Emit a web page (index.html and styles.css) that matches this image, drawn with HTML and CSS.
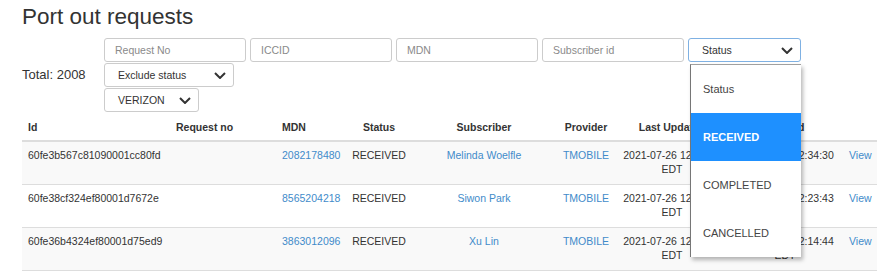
FILE: index.html
```html
<!DOCTYPE html>
<html lang="en">
<head>
<meta charset="utf-8">
<title>Port out requests</title>
<link rel="stylesheet" href="styles.css">
</head>
<body>
<div class="page">
  <h1 class="title">Port out requests</h1>
  <div class="filters">
    <div class="total">Total: 2008</div>
    <div class="filter-rows">
      <div class="filter-row">
        <input class="field" type="text" placeholder="Request No">
        <input class="field" type="text" placeholder="ICCID">
        <input class="field" type="text" placeholder="MDN">
        <input class="field" type="text" placeholder="Subscriber id">
        <div class="select select-status is-open">
          <span class="select-label">Status</span>
          <svg class="chev" width="12" height="7" viewBox="0 0 12 7"><polyline points="1,1 6,6 11,1" fill="none" stroke="#333" stroke-width="2"/></svg>
          <ul class="menu">
            <li class="menu-item">Status</li>
            <li class="menu-item is-active">RECEIVED</li>
            <li class="menu-item">COMPLETED</li>
            <li class="menu-item">CANCELLED</li>
          </ul>
        </div>
      </div>
      <div class="filter-row">
        <div class="select select-exclude">
          <span class="select-label">Exclude status</span>
          <svg class="chev" width="12" height="7" viewBox="0 0 12 7"><polyline points="1,1 6,6 11,1" fill="none" stroke="#333" stroke-width="2"/></svg>
        </div>
      </div>
      <div class="filter-row">
        <div class="select select-provider">
          <span class="select-label">VERIZON</span>
          <svg class="chev" width="12" height="7" viewBox="0 0 12 7"><polyline points="1,1 6,6 11,1" fill="none" stroke="#333" stroke-width="2"/></svg>
        </div>
      </div>
    </div>
  </div>

  <table class="grid">
    <colgroup>
      <col class="c-id"><col class="c-req"><col class="c-mdn"><col class="c-status"><col class="c-sub"><col class="c-prov"><col class="c-upd"><col class="c-cre"><col class="c-view">
    </colgroup>
    <thead>
      <tr>
        <th class="left">Id</th>
        <th class="left">Request no</th>
        <th class="left">MDN</th>
        <th>Status</th>
        <th>Subscriber</th>
        <th>Provider</th>
        <th>Last Updated</th>
        <th>Created</th>
        <th class="left"></th>
      </tr>
    </thead>
    <tbody>
      <tr class="stripe">
        <td class="left">60fe3b567c81090001cc80fd</td>
        <td class="left"></td>
        <td class="left"><a class="link" href="#">2082178480</a></td>
        <td>RECEIVED</td>
        <td><a class="link" href="#">Melinda Woelfle</a></td>
        <td><a class="link" href="#">TMOBILE</a></td>
        <td>2021-07-26 12:34:30 EDT</td>
        <td>2021-07-26 12:34:30 EDT</td>
        <td class="left"><a class="link" href="#">View</a></td>
      </tr>
      <tr>
        <td class="left">60fe38cf324ef80001d7672e</td>
        <td class="left"></td>
        <td class="left"><a class="link" href="#">8565204218</a></td>
        <td>RECEIVED</td>
        <td><a class="link" href="#">Siwon Park</a></td>
        <td><a class="link" href="#">TMOBILE</a></td>
        <td>2021-07-26 12:23:43 EDT</td>
        <td>2021-07-26 12:23:43 EDT</td>
        <td class="left"><a class="link" href="#">View</a></td>
      </tr>
      <tr class="stripe">
        <td class="left">60fe36b4324ef80001d75ed9</td>
        <td class="left"></td>
        <td class="left"><a class="link" href="#">3863012096</a></td>
        <td>RECEIVED</td>
        <td><a class="link" href="#">Xu Lin</a></td>
        <td><a class="link" href="#">TMOBILE</a></td>
        <td>2021-07-26 12:14:44 EDT</td>
        <td>2021-07-26 12:14:44 EDT</td>
        <td class="left"><a class="link" href="#">View</a></td>
      </tr>
    </tbody>
  </table>
</div>
</body>
</html>
```

FILE: styles.css
```css
* { box-sizing: border-box; }

html, body {
  margin: 0;
  padding: 0;
  background: #fff;
}

body {
  font-family: "Liberation Sans", Arial, Helvetica, sans-serif;
  color: #333;
  font-size: 10.5px;
}

.page {
  padding: 4px 9px 0 22px;
}

.title {
  margin: 0;
  font-size: 22.5px;
  line-height: 25px;
  font-weight: normal;
  color: #333;
}

.filters {
  display: flex;
  align-items: center;
  margin-top: 9px;
}

.total {
  width: 82px;
  flex: none;
  font-size: 13px;
  padding-bottom: 2px;
}

.filter-rows {
  display: flex;
  flex-direction: column;
  gap: 1px;
}

.filter-row {
  display: flex;
  gap: 4px;
}

.field {
  width: 142px;
  height: 24px;
  margin: 0;
  padding: 0 10px;
  border: 1px solid #ccc;
  border-radius: 3px;
  font-family: "Liberation Sans", Arial, Helvetica, sans-serif;
  font-size: 10.5px;
  color: #333;
  background: #fff;
  outline: none;
}

.field::placeholder {
  color: #8a8a8a;
  opacity: 1;
}

.select {
  position: relative;
  height: 24px;
  display: flex;
  align-items: center;
  justify-content: space-between;
  padding: 0 7px 0 13px;
  border: 1px solid #ccc;
  border-radius: 3px;
  background: #fff;
  color: #333;
  font-size: 10.5px;
}

.chev { display: block; flex: none; }

.select-status {
  width: 113px;
  border-color: #7fb1e3;
}

.select-exclude { width: 130px; }
.select-provider { width: 95px; }

.menu {
  position: absolute;
  top: 25px;
  left: 1px;
  width: 111px;
  margin: 0;
  padding: 0;
  list-style: none;
  background: #fff;
  border-top: 1px solid #a0a0a0;
  border-left: 1px solid #767676;
  box-shadow: 2px 3px 4px rgba(0, 0, 0, 0.28);
  z-index: 10;
}

.menu-item {
  height: 48px;
  display: flex;
  align-items: center;
  padding-left: 12px;
  font-size: 11px;
  color: #444;
}

.menu-item.is-active {
  background: #1e90ff;
  color: #fff;
  font-weight: bold;
}

.grid {
  width: 855px;
  margin-top: 2px;
  table-layout: fixed;
  border-collapse: separate;
  border-spacing: 0;
  font-size: 10.5px;
  line-height: 14px;
}

.c-id { width: 148px; }
.c-req { width: 106px; }
.c-mdn { width: 69px; }
.c-status { width: 68px; }
.c-sub { width: 142px; }
.c-prov { width: 62px; }
.c-upd { width: 110px; }
.c-cre { width: 116px; }
.c-view { width: 34px; }

.grid th {
  padding: 6px 6px 6px;
  font-weight: bold;
  text-align: center;
  border-bottom: 2px solid #ddd;
  vertical-align: bottom;
}

.grid td {
  padding: 6px 6px 8px;
  text-align: center;
  vertical-align: top;
  border-bottom: 1px solid #ddd;
}

.grid .left { text-align: left; }

.grid tr.stripe td { background: #f9f9f9; }

.link {
  color: #428bca;
  text-decoration: none;
}
```
